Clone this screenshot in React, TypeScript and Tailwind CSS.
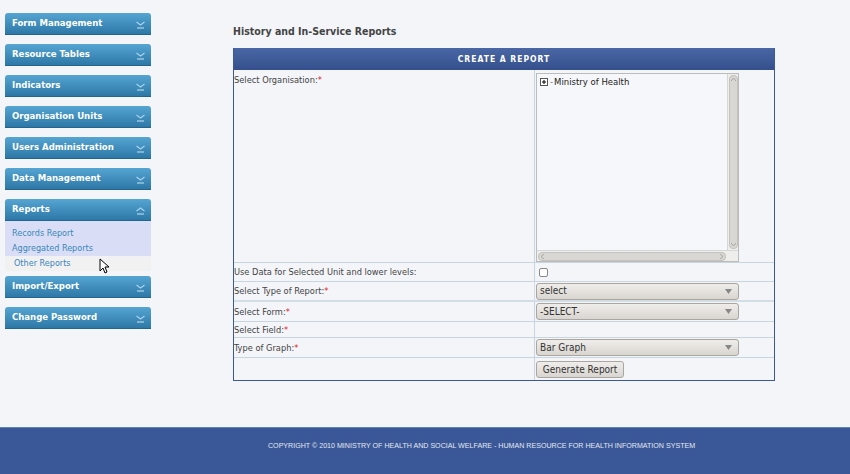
import React from "react";

const Chevron = ({ up = false }: { up?: boolean }) => (
  <svg width="9" height="10" viewBox="0 0 9 10" className="shrink-0">
    {up ? (
      <path d="M0.5 6 L4.5 3 L8.5 6" fill="none" stroke="#a9d4f0" strokeWidth="1.1" />
    ) : (
      <path d="M0.5 3 L4.5 6 L8.5 3" fill="none" stroke="#a9d4f0" strokeWidth="1.1" />
    )}
    <line x1="1" y1="9" x2="8" y2="9" stroke="#c9e4f5" strokeWidth="1" />
  </svg>
);

const NavButton = ({ label, up = false }: { label: string; up?: boolean }) => (
  <div className="h-[22px] w-[146px] rounded-t-[3px] bg-gradient-to-b from-[#55a5d3] to-[#2d78a6] border-b border-[#23658d] flex items-center justify-between pl-[7px] pr-[6px]">
    <span className="text-white font-bold text-[9.5px] leading-none -mt-[2px]" style={{ fontFamily: '"DejaVu Sans Condensed", "DejaVu Sans", sans-serif' }}>
      {label}
    </span>
    <Chevron up={up} />
  </div>
);

const Req = () => <span className="text-[#e02020]">*</span>;

const FakeSelect = ({ text }: { text: string }) => (
  <div className="h-[17px] w-[203px] rounded-[3px] border border-[#a9a6a0] bg-gradient-to-b from-[#efedea] to-[#d9d6d1] flex items-center justify-between pl-[3px] pr-[6px]">
    <span className="text-[10px] text-[#333] leading-none" style={{ fontFamily: '"DejaVu Sans Condensed", "DejaVu Sans", sans-serif' }}>{text}</span>
    <svg width="7" height="5" viewBox="0 0 7 5"><path d="M0 0 L7 0 L3.5 5 Z" fill="#888" /></svg>
  </div>
);

const labelFont = { fontFamily: '"DejaVu Sans Condensed", "DejaVu Sans", sans-serif' };

export default function App() {
  return (
    <div className="w-[850px] h-[474px] bg-[#f3f5f9] flex flex-col overflow-hidden relative">
      <div className="h-[427px] flex">
        {/* Sidebar */}
        <div className="w-[151px] pl-[5px] pt-[13px] flex flex-col">
          <div className="flex flex-col gap-[9px]">
            <NavButton label="Form Management" />
            <NavButton label="Resource Tables" />
            <NavButton label="Indicators" />
            <NavButton label="Organisation Units" />
            <NavButton label="Users Administration" />
            <NavButton label="Data Management" />
          </div>
          <div className="mt-[9px] flex flex-col">
            <NavButton label="Reports" up />
            <div className="w-[146px] bg-[#d9def6] pt-[5px] flex flex-col text-[9px] text-[#3b87b8]" style={labelFont}>
              <div className="h-[15px] pl-[7px] flex items-center">Records Report</div>
              <div className="h-[15px] pl-[7px] flex items-center">Aggregated Reports</div>
              <div className="h-[15px] pl-[9px] flex items-center bg-[#f1f1f1] text-[#3a84bd]">Other Reports</div>
            </div>
          </div>
          <div className="mt-[5px] flex flex-col gap-[9px]">
            <NavButton label="Import/Export" />
            <NavButton label="Change Password" />
          </div>
        </div>

        {/* Main */}
        <div className="pl-[82px] pt-[25px] flex flex-col">
          <div className="text-[10.5px] font-bold text-[#444] leading-[13px]" style={labelFont}>History and In-Service Reports</div>
          <div className="mt-[10px] w-[542px] border-x border-b border-[#3c5896] flex flex-col">
            <div className="h-[22px] bg-gradient-to-b from-[#4a67a5] to-[#344f8c] flex items-center justify-center">
              <span className="text-white font-bold text-[8.5px] tracking-[1px]" style={labelFont}>CREATE A REPORT</span>
            </div>
            <div className="grid grid-cols-[301px_1fr] text-[9.2px] text-[#444]" style={labelFont}>
              {/* Org row */}
              <div className="h-[193px] border-r border-b border-[#c7d5df] pt-[3px]">
                Select Organisation:<Req />
              </div>
              <div className="h-[193px] border-b border-[#c7d5df] pt-[3px] pl-[1px]">
                <div className="w-[203px] h-[189px] border border-[#bcbcbc] bg-[#f6f7fa] flex flex-col">
                  <div className="flex-1 flex">
                    <div className="flex-1 pl-[3px] pt-[2px]">
                      <div className="flex items-center gap-[1px] text-[8.5px] text-[#222]" style={{ fontFamily: '"DejaVu Sans", sans-serif' }}>
                        <svg width="9" height="9" viewBox="0 0 9 9"><rect x="0.5" y="0.5" width="7" height="7" fill="#fff" stroke="#555" /><path d="M2 4 H6 M4 2 V6" stroke="#000" /></svg>
                        <span className="text-[#777]">-</span>
                        <span>Ministry of Health</span>
                      </div>
                    </div>
                    <div className="w-[11px] border-l border-[#d6d6d6] bg-[#eeeeec] flex flex-col items-center py-[1px]">
                      <div className="w-[9px] h-[174px] rounded-[4px] bg-[#d9d7d3] border border-[#c4c2be] flex flex-col items-center justify-between py-[2px]">
                        <svg width="5" height="3" viewBox="0 0 5 3"><path d="M0 3 L2.5 0 L5 3" fill="none" stroke="#999" strokeWidth="0.8" /></svg>
                        <svg width="5" height="3" viewBox="0 0 5 3"><path d="M0 0 L2.5 3 L5 0" fill="none" stroke="#999" strokeWidth="0.8" /></svg>
                      </div>
                    </div>
                  </div>
                  <div className="h-[11px] border-t border-[#d6d6d6] bg-[#eeeeec] flex items-center px-[1px]">
                    <div className="w-[188px] h-[9px] rounded-[4px] bg-[#d9d7d3] border border-[#c4c2be] flex items-center justify-between px-[2px]">
                      <svg width="3" height="5" viewBox="0 0 3 5"><path d="M3 0 L0 2.5 L3 5" fill="none" stroke="#999" strokeWidth="0.8" /></svg>
                      <svg width="3" height="5" viewBox="0 0 3 5"><path d="M0 0 L3 2.5 L0 5" fill="none" stroke="#999" strokeWidth="0.8" /></svg>
                    </div>
                  </div>
                </div>
              </div>

              {/* checkbox row */}
              <div className="h-[19px] border-r border-b border-[#c7d5df] flex items-center">Use Data for Selected Unit and lower levels:</div>
              <div className="h-[19px] border-b border-[#c7d5df] flex items-center pl-[4px]">
                <div className="w-[9px] h-[9px] rounded-[2px] border border-[#888] bg-white" />
              </div>

              {/* type of report */}
              <div className="h-[20px] border-r border-b-2 border-[#d3dde5] flex items-center">Select Type of Report:<Req /></div>
              <div className="h-[20px] border-b-2 border-[#d3dde5] flex items-center pl-[1px]"><FakeSelect text="select" /></div>

              {/* form */}
              <div className="h-[20px] border-r border-b border-[#c7d5df] flex items-center">Select Form:<Req /></div>
              <div className="h-[20px] border-b border-[#c7d5df] flex items-center pl-[1px]"><FakeSelect text="-SELECT-" /></div>

              {/* field */}
              <div className="h-[16px] border-r border-b border-[#c7d5df] flex items-center">Select Field:<Req /></div>
              <div className="h-[16px] border-b border-[#c7d5df]" />

              {/* graph */}
              <div className="h-[20px] border-r border-b border-[#c7d5df] flex items-center">Type of Graph:<Req /></div>
              <div className="h-[20px] border-b border-[#c7d5df] flex items-center pl-[1px]"><FakeSelect text="Bar Graph" /></div>

              {/* button */}
              <div className="h-[22px] border-r border-[#c7d5df]" />
              <div className="h-[22px] flex items-center pl-[1px]">
                <div className="h-[17px] w-[88px] rounded-[3px] border border-[#a9a6a0] bg-gradient-to-b from-[#efedea] to-[#d9d6d1] flex items-center justify-center text-[10px] text-[#333]">
                  Generate Report
                </div>
              </div>
            </div>
          </div>
        </div>
      </div>

      {/* Footer */}
      <div className="flex-1 bg-[#3a5897] border-t border-[#5b86b3] flex justify-start pl-[268px] pt-[15px]">
        <span className="text-[7.1px] text-[#e4e8f2] leading-none whitespace-nowrap" style={{ fontFamily: '"Liberation Sans", Arial, sans-serif' }}>
          COPYRIGHT © 2010 MINISTRY OF HEALTH AND SOCIAL WELFARE - HUMAN RESOURCE FOR HEALTH INFORMATION SYSTEM
        </span>
      </div>

      {/* Cursor */}
      <svg className="absolute left-[99px] top-[258px]" width="11" height="16" viewBox="0 0 11 16">
        <path d="M1 1 L1 13 L4 10 L6 15 L8 14 L6 9 L10 9 Z" fill="#fff" stroke="#000" strokeWidth="1" strokeLinejoin="round" />
      </svg>
    </div>
  );
}
